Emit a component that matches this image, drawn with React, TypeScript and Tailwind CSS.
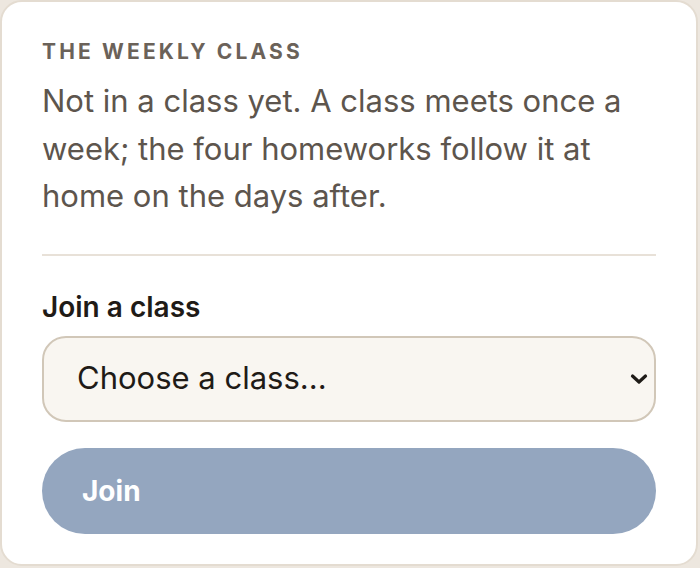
import React from 'react';

const App: React.FC = () => {
  return (
    <div className="w-[700px] h-[568px] bg-[#ede7df]" style={{ fontFamily: 'Inter, "Noto Sans", sans-serif' }}>
      <div className="w-[698px] h-[566px] rounded-[22px] border-2 border-[#e4dcd1] bg-white px-[40px] pt-[36px]">
        {/* Header */}
        <h2 className="text-[21px] leading-[28px] font-bold uppercase tracking-[0.15em] text-[#6b6259]">
          The weekly class
        </h2>
        <p className="mt-[11px] text-[31px] leading-[47.5px] text-[#5d554d]">
          Not in a class yet. A class meets once a week; the four homeworks follow it at home on the days after.
        </p>

        <div className="mt-[34px] border-t-2 border-[#e8e1d8]" />

        {/* Join form */}
        <label className="mt-[34px] block text-[28px] leading-[34px] font-semibold text-[#1f1b17]">
          Join a class
        </label>
        <div className="relative mt-[12px]">
          <select
            className="w-full h-[86px] appearance-none rounded-[24px] border-2 border-[#d1c7b8] bg-[#f9f6f1] pl-[33px] pr-[60px] text-[31px] text-[#1f1b17] outline-none"
            defaultValue=""
          >
            <option value="">Choose a class...</option>
          </select>
          <svg
            className="pointer-events-none absolute right-[8px] top-1/2 -translate-y-1/2 w-[18px] h-[12px]"
            viewBox="0 0 18 12"
            fill="none"
            stroke="#1f1b17"
            strokeWidth="3.2"
            strokeLinecap="round"
            strokeLinejoin="round"
          >
            <path d="M2.5 3 L9 9 L15.5 3" />
          </svg>
        </div>

        <button
          className="mt-[26px] w-full h-[86px] rounded-full bg-[#94a6bf] pl-[40px] text-left text-[28px] font-bold text-white"
          disabled
        >
          Join
        </button>
      </div>
    </div>
  );
};

export default App;
